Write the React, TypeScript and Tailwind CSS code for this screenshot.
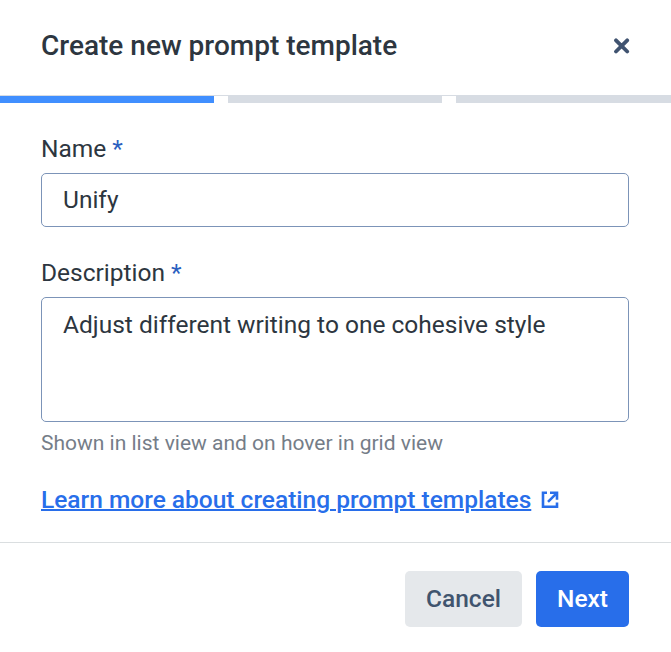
export default function App() {
  return (
    <div className="flex h-[652px] w-[671px] flex-col overflow-hidden bg-white font-[Roboto,sans-serif] text-[#2d3640]">
      <header className="flex h-[96px] shrink-0 items-start justify-between border-b border-[#d7dce3] px-[41px] pt-[29px]">
        <h1 className="text-[28px] leading-[34px] font-medium whitespace-nowrap">Create new prompt template</h1>
        <button aria-label="Close" className="mt-[9px]">
          <svg width="17" height="16" viewBox="0 0 17 16" fill="none" stroke="#405370" strokeWidth="3.8" strokeLinecap="round"><path d="M3 2.3l11.2 11.2M14.2 2.3L3 13.5" /></svg>
        </button>
      </header>
      <div className="flex h-[7px] shrink-0 gap-[14px]">
        <div className="w-[214px] bg-[#408fff]" />
        <div className="w-[214px] bg-[#d7dce3]" />
        <div className="flex-1 bg-[#d7dce3]" />
      </div>
      <main className="flex flex-col px-[41px] pt-[30px] text-[24.5px]">
        <label className="leading-[32px]">Name <span className="text-[#2b5fc0]">*</span></label>
        <input className="mt-[8px] h-[54px] w-[588px] rounded-[5px] border border-[#7c94b8] px-[21px] pb-[2px] outline-none" defaultValue="Unify" />
        <label className="mt-[30px] leading-[32px]">Description <span className="text-[#2b5fc0]">*</span></label>
        <textarea className="mt-[8px] h-[125px] w-[588px] resize-none rounded-[5px] border border-[#7c94b8] px-[21px] pt-[11px] leading-[32px] outline-none" defaultValue="Adjust different writing to one cohesive style" />
        <p className="mt-[8px] text-[21px] leading-[26px] text-[#757d88]">Shown in list view and on hover in grid view</p>
        <a className="mt-[28px] flex items-center gap-[10px] leading-[32px] font-medium text-[#286eea]">
          <span className="underline decoration-2">Learn more about creating prompt templates</span>
          <svg className="mb-px" width="18" height="18" viewBox="0 0 18 18" fill="none" stroke="currentColor" strokeWidth="2.6"><path d="M6 1.8H2v14h14v-4.3M9 1.8h7v7M15.5 2.3L7 10.8" /></svg>
        </a>
      </main>
      <footer className="mt-[26px] flex flex-1 items-start justify-end gap-[14px] border-t border-[#dadee0] pt-[28px] pr-[42px] text-[24.5px] font-medium">
        <button className="h-[56px] w-[117px] rounded-[5px] bg-[#e5e8eb] text-[#40546e]">Cancel</button>
        <button className="h-[56px] w-[93px] rounded-[5px] bg-[#286eea] text-white">Next</button>
      </footer>
    </div>
  );
}
